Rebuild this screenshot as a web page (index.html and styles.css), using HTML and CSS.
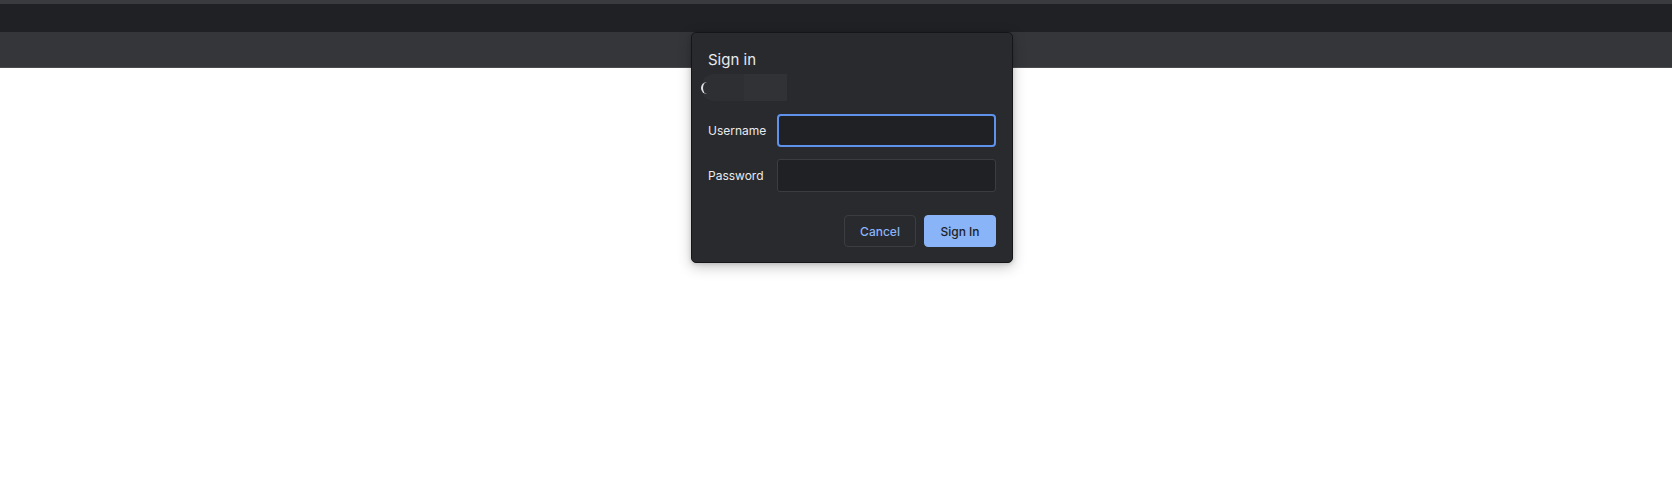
FILE: index.html
```html
<!DOCTYPE html>
<html>
<head>
<meta charset="utf-8">
<link rel="stylesheet" href="styles.css">
</head>
<body>
<div class="chrome">
  <div class="strip"></div>
  <div class="tabbar"></div>
  <div class="toolbar"></div>
</div>
<main class="page"></main>
<div class="dialog">
  <div class="title">Sign in</div>
  <div class="origin"><span class="origin-a"><span class="crescent"></span></span><span class="origin-b"></span></div>
  <form class="form">
    <label class="label" for="u">Username</label>
    <input id="u" class="field focused" type="text">
    <label class="label" for="p">Password</label>
    <input id="p" class="field" type="password">
  </form>
  <div class="actions">
    <button class="btn cancel">Cancel</button>
    <button class="btn primary">Sign In</button>
  </div>
</div>
</body>
</html>
```
FILE: styles.css
```css
html, body {
  margin: 0;
  padding: 0;
  background: #ffffff;
  font-family: Inter, "Liberation Sans", sans-serif;
}
.chrome {
  display: flex;
  flex-direction: column;
}
.strip {
  height: 4px;
  background: #3a3b3e;
}
.tabbar {
  height: 28px;
  background: #202124;
}
.toolbar {
  height: 35px;
  background: #35363a;
  border-bottom: 1px solid #4a4b4f;
}
.page {
  height: 416px;
  background: #fff;
}
.dialog {
  position: absolute;
  left: 691px;
  top: 32px;
  width: 322px;
  box-sizing: border-box;
  background: #292a2d;
  border: 1px solid #161618;
  border-radius: 5px;
  box-shadow: 0 4px 14px rgba(0, 0, 0, 0.22), 0 1px 4px rgba(0, 0, 0, 0.15);
  padding: 17px 16px 15px 16px;
  color: #e8eaed;
}
.title {
  font-size: 15px;
  line-height: 20px;
  color: #e8eaed;
}
.origin {
  display: flex;
  margin: 4px 0 0 -7px;
  width: 86px;
  height: 27px;
}
.origin-a {
  display: flex;
  align-items: center;
  width: 43px;
  background: #2e2f33;
  border-radius: 13px 0 0 13px;
}
.crescent {
  width: 6px;
  height: 12px;
  box-sizing: border-box;
  border-left: 2px solid #e4e4e6;
  border-radius: 6px 0 0 6px;
}
.origin-b {
  width: 43px;
  background: #313236;
}
.form {
  display: grid;
  grid-template-columns: 69px 219px;
  row-gap: 12px;
  align-items: center;
  margin-top: 13px;
}
.label {
  font-size: 12px;
  color: #e8eaed;
}
.field {
  box-sizing: border-box;
  width: 219px;
  height: 33px;
  margin: 0;
  background: #202124;
  border: 1px solid #3c3d41;
  border-radius: 3px;
  outline: none;
  color: #e8eaed;
}
.field.focused {
  border: 2px solid #5e92ec;
  border-radius: 4px;
}
.actions {
  display: flex;
  justify-content: flex-end;
  gap: 8px;
  margin-top: 23px;
}
.btn {
  box-sizing: border-box;
  width: 72px;
  height: 32px;
  border-radius: 4px;
  font-family: Inter, "Liberation Sans", sans-serif;
  font-size: 12px;
  font-weight: 500;
  padding: 0;
}
.cancel {
  background: #292a2d;
  border: 1px solid #3c3d41;
  color: #8ab4f8;
}
.primary {
  background: #8ab4f8;
  border: 1px solid #8ab4f8;
  color: #202124;
}
```
